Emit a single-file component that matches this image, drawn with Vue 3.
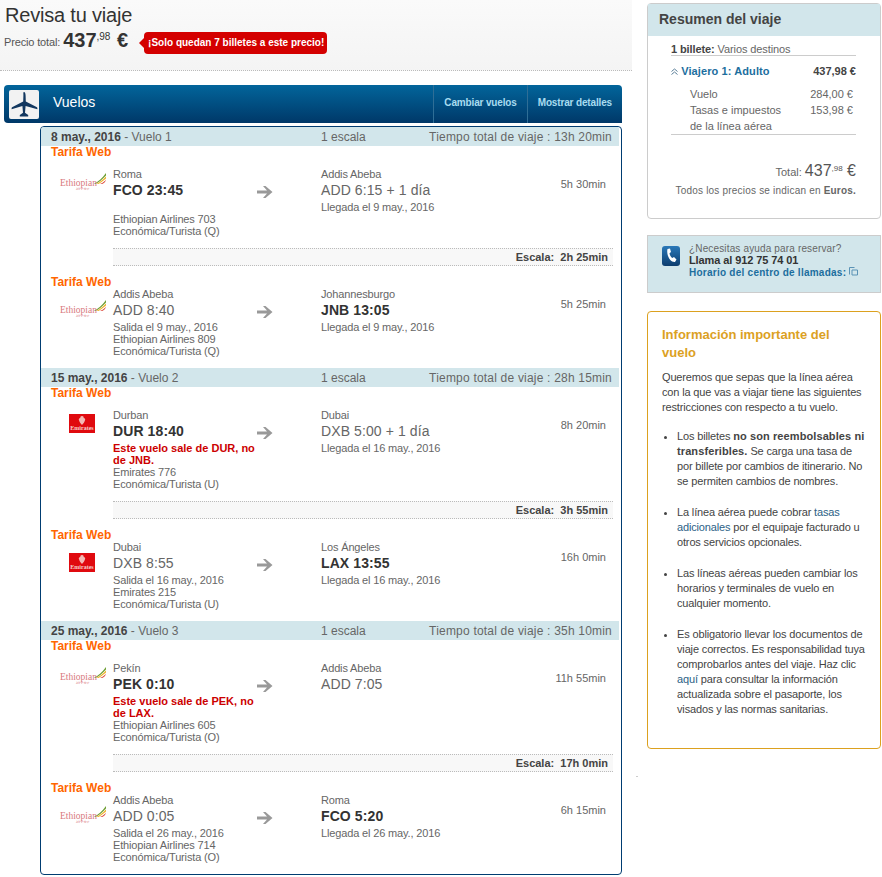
<template>
  <div class="page">
    <div class="left">
      <header class="top">
        <h1>Revisa tu viaje</h1>
        <div class="price-row">
          <span class="price-label">Precio total:</span>
          <span class="price">437<sup>,98</sup> €</span>
          <span class="alert">¡Solo quedan 7 billetes a este precio!</span>
        </div>
      </header>

      <div class="bar">
        <span class="plane-box">
          <svg width="30" height="29" viewBox="0 0 30 29">
            <path d="M15 2c1 0 1.500 1.500 1.600 3.500l.2 6 10.700 5.500c.6.300.9.700.9 1.300v1l-11.800-3.300-.6 6.800 3.200 2.200v1.500h-8.400V25l3.200-2.200-.6-6.800L2.600 19.300v-1c0-.6.300-1 .9-1.300l10.700-5.500.2-6C14.500 3.500 14 2 15 2z" fill="#12375f" />
          </svg>
        </span>
        <span class="bar-title">Vuelos</span>
        <a class="bar-link">Cambiar vuelos</a>
        <a class="bar-link">Mostrar detalles</a>
      </div>

      <div class="flights">
        <section v-for="flight in flights" :key="flight.name" class="flight">
          <div class="day">
            <span class="day-date"><b>{{ flight.date }}</b> - {{ flight.name }}</span>
            <span class="day-stops">1 escala</span>
            <span class="day-total">Tiempo total de viaje : {{ flight.total }}</span>
          </div>
          <template v-for="(seg, i) in flight.segments" :key="i">
            <div class="tarifa" :class="{ later: i > 0 }">Tarifa Web</div>
            <div class="seg" :class="{ 'seg-first': i === 0 }">
              <div class="logo-cell">
                <span v-if="seg.logo === 'et'" class="logo-et">
                  <svg class="et-wing" width="12" height="11" viewBox="0 0 12 11">
                    <path d="M0 10.500C4 9 8 5.500 12 0v2.500C9 6 5 9.500 1.500 11z" fill="#6f9f35" />
                    <path d="M2.500 10.500C6 9.500 9 6.500 12 3.500v2C9 8 6.500 10 4.500 11z" fill="#efb327" />
                    <path d="M6 11c2.500-1 4.500-2.500 6-4.500L11 9c-1 1-2 1.500-3 2z" fill="#d8392b" />
                  </svg>
                  <span class="et-name">Ethiopian</span>
                  <span class="et-sub">እትዮጵያ</span>
                </span>
                <span v-else class="logo-ek">
                  <svg width="8" height="9" viewBox="0 0 8 9">
                    <path d="M4 0c1.500 0 2 1 1.600 2 1.300.2 2 1.200 1.400 2.300C6.500 6 5.600 7.500 4 9 2.400 7.500 1.500 6 1 4.300.4 3.200 1.100 2.200 2.400 2 2 1 2.500 0 4 0z" fill="#f3b9b4" />
                  </svg>
                  <span>Emirates</span>
                </span>
              </div>
              <div class="dep">
                <div class="city">{{ seg.from }}</div>
                <div class="code" :class="{ strong: i === 0 }">{{ seg.dep }}</div>
                <div v-if="seg.warn" class="warn">{{ seg.warn }}</div>
                <div v-else class="line">{{ seg.left || '&nbsp;' }}</div>
                <div class="line">{{ seg.airline }}</div>
                <div class="line">{{ seg.cabin }}</div>
              </div>
              <div class="arrow-cell">
                <svg width="16" height="14" viewBox="0 0 16 14">
                  <path d="M8.500 1L15.500 7l-7 6H6l4-4.500H0v-3h10L6 1z" fill="#999" />
                </svg>
              </div>
              <div class="arr">
                <div class="city">{{ seg.to }}</div>
                <div class="code" :class="{ strong: i === 1 }">{{ seg.arr }}</div>
                <div class="line">{{ seg.note }}</div>
              </div>
              <div class="dur">{{ seg.dur }}</div>
            </div>
            <div v-if="i === 0" class="layover"><b>Escala:&nbsp; {{ flight.layover }}</b></div>
          </template>
        </section>
      </div>
    </div>

    <aside class="right">
      <div class="summary">
        <h2>Resumen del viaje</h2>
        <div class="summary-body">
          <div class="ticket"><b>1 billete:</b> Varios destinos</div>
          <div class="traveller">
            <span class="trav-name">
              <svg width="7" height="7" viewBox="0 0 7 7">
                <path d="M.5 3.500L3.500 1l3 2.500M.5 6.500L3.500 4l3 2.500" fill="none" stroke="#5b7f99" />
              </svg>
              Viajero 1: Adulto
            </span>
            <b>437,98 €</b>
          </div>
          <div class="costs">
            <div class="cost"><span>Vuelo</span><span>284,00 €</span></div>
            <div class="cost"><span>Tasas e impuestos<br>de la línea aérea</span><span>153,98 €</span></div>
          </div>
          <div class="sum-total">Total: <span>437<sup>,98</sup> €</span></div>
          <div class="sum-note">Todos los precios se indican en <b>Euros.</b></div>
        </div>
      </div>

      <div class="help">
        <svg class="phone" width="18" height="20" viewBox="0 0 18 20">
          <defs>
            <linearGradient id="phone-bg" x1="0" y1="0" x2="0" y2="1">
              <stop offset="0" stop-color="#2a78b8" />
              <stop offset="1" stop-color="#0d3d6e" />
            </linearGradient>
          </defs>
          <rect width="18" height="20" rx="3" fill="url(#phone-bg)" />
          <path d="M5.500 3L8 2.500l1 3.500-1.500 1.200c.3 2 1.300 3.700 2.800 4.800l1.700-1 2.500 2.500-1.500 2.500C8.500 16.500 4 9.500 5.500 3z" fill="#fff" />
        </svg>
        <div class="help-text">
          <div>¿Necesitas ayuda para reservar?</div>
          <div class="help-phone">Llama al 912 75 74 01</div>
          <div class="help-hours">Horario del centro de llamadas:
            <svg width="9" height="9" viewBox="0 0 9 9">
              <path d="M.5 7.500V.5h5M3 3h5.500v5H3z" fill="none" stroke="#5b93b5" />
            </svg>
          </div>
        </div>
      </div>

      <div class="info">
        <h3>Información importante del vuelo</h3>
        <p>Queremos que sepas que la línea aérea con la que vas a viajar tiene las siguientes restricciones con respecto a tu vuelo.</p>
        <ul>
          <li>Los billetes <b>no son reembolsables ni transferibles.</b> Se carga una tasa de por billete por cambios de itinerario. No se permiten cambios de nombres.</li>
          <li>La línea aérea puede cobrar <a>tasas adicionales</a> por el equipaje facturado u otros servicios opcionales.</li>
          <li>Las líneas aéreas pueden cambiar los horarios y terminales de vuelo en cualquier momento.</li>
          <li>Es obligatorio llevar los documentos de viaje correctos. Es responsabilidad tuya comprobarlos antes del viaje. Haz clic <a>aquí</a> para consultar la información actualizada sobre el pasaporte, los visados y las normas sanitarias.</li>
        </ul>
      </div>
    </aside>
    <i class="speck"></i>
  </div>
</template>

<script setup>
const flights = [
  {
    date: '8 may., 2016',
    name: 'Vuelo 1',
    total: '13h 20min',
    layover: '2h 25min',
    segments: [
      { logo: 'et', from: 'Roma', dep: 'FCO 23:45', airline: 'Ethiopian Airlines 703', cabin: 'Económica/Turista (Q)', to: 'Addis Abeba', arr: 'ADD 6:15 + 1 día', note: 'Llegada el 9 may., 2016', dur: '5h 30min' },
      { logo: 'et', from: 'Addis Abeba', dep: 'ADD 8:40', left: 'Salida el 9 may., 2016', airline: 'Ethiopian Airlines 809', cabin: 'Económica/Turista (Q)', to: 'Johannesburgo', arr: 'JNB 13:05', note: 'Llegada el 9 may., 2016', dur: '5h 25min' }
    ]
  },
  {
    date: '15 may., 2016',
    name: 'Vuelo 2',
    total: '28h 15min',
    layover: '3h 55min',
    segments: [
      { logo: 'ek', from: 'Durban', dep: 'DUR 18:40', warn: 'Este vuelo sale de DUR, no de JNB.', airline: 'Emirates 776', cabin: 'Económica/Turista (U)', to: 'Dubai', arr: 'DXB 5:00 + 1 día', note: 'Llegada el 16 may., 2016', dur: '8h 20min' },
      { logo: 'ek', from: 'Dubai', dep: 'DXB 8:55', left: 'Salida el 16 may., 2016', airline: 'Emirates 215', cabin: 'Económica/Turista (U)', to: 'Los Ángeles', arr: 'LAX 13:55', note: 'Llegada el 16 may., 2016', dur: '16h 0min' }
    ]
  },
  {
    date: '25 may., 2016',
    name: 'Vuelo 3',
    total: '35h 10min',
    layover: '17h 0min',
    segments: [
      { logo: 'et', from: 'Pekín', dep: 'PEK 0:10', warn: 'Este vuelo sale de PEK, no de LAX.', airline: 'Ethiopian Airlines 605', cabin: 'Económica/Turista (O)', to: 'Addis Abeba', arr: 'ADD 7:05', note: '', dur: '11h 55min' },
      { logo: 'et', from: 'Addis Abeba', dep: 'ADD 0:05', left: 'Salida el 26 may., 2016', airline: 'Ethiopian Airlines 714', cabin: 'Económica/Turista (O)', to: 'Roma', arr: 'FCO 5:20', note: 'Llegada el 26 may., 2016', dur: '6h 15min' }
    ]
  }
]
</script>

<style scoped>
.page {
  position: relative;
  width: 882px;
  height: 877px;
  overflow: hidden;
  display: flex;
  font-family: "Liberation Sans", Arial, sans-serif;
  font-size: 11px;
  color: #666;
  background: #fff;
}

.speck {
  position: absolute;
  left: 636px;
  top: 776px;
  width: 2px;
  height: 1px;
  background: #ccc;
}

.left {
  width: 632px;
  flex: none;
}

.top {
  height: 71px;
  box-sizing: border-box;
  padding: 4px 0 0 5px;
  background: linear-gradient(#fafafa, #f4f4f4);
  border-bottom: 1px dotted #bbb;
}

h1 {
  margin: 0;
  font-size: 20px;
  line-height: 23px;
  font-weight: normal;
  letter-spacing: -.2px;
  color: #333;
}

.price-row {
  display: flex;
  align-items: center;
  height: 26px;
  margin-left: -1px;
}

.price-label {
  font-size: 11px;
  letter-spacing: -.15px;
  color: #555;
  margin-top: 4px;
}

.price {
  margin-left: 3px;
  font-size: 20px;
  font-weight: bold;
  color: #333;
}

.price sup {
  font-size: 10px;
  font-weight: normal;
  vertical-align: 7px;
  line-height: 0;
  margin-right: 1px;
}

.alert {
  position: relative;
  margin-left: 16px;
  margin-top: 5px;
  padding: 0 3px 0 4px;
  height: 22px;
  line-height: 22px;
  background: #d40000;
  border-radius: 4px;
  color: #fff;
  font-size: 10px;
  font-weight: bold;
  white-space: nowrap;
}

.alert::before {
  content: "";
  position: absolute;
  left: -5px;
  top: 6px;
  border: 5px solid transparent;
  border-left: 0;
  border-right-color: #d40000;
}

.bar {
  margin: 14px 0 0 4px;
  width: 618px;
  height: 38px;
  display: flex;
  align-items: center;
  background: linear-gradient(#02659b, #003868);
  border-radius: 4px 4px 0 4px;
  color: #fff;
}

.plane-box {
  width: 30px;
  height: 29px;
  margin-left: 5px;
  background: #f2f2f2;
  border-radius: 2px;
  display: flex;
}

.bar-title {
  flex: 1;
  margin-left: 14px;
  font-size: 14px;
  margin-bottom: 4px;
}

.bar-link {
  height: 100%;
  box-sizing: border-box;
  display: flex;
  align-items: center;
  padding: 0 10px 3px;
  border-left: 1px solid #2f6e96;
  font-size: 10px;
  font-weight: bold;
  letter-spacing: -.15px;
  color: #a8dcf0;
}

.flights {
  width: 582px;
  height: 749px;
  margin: 3px 0 0 40px;
  box-sizing: border-box;
  border: 1px solid #003c71;
  border-radius: 4px;
  overflow: hidden;
}

.flight {
  padding: 0 2px 11px 0;
}

.day {
  display: grid;
  grid-template-columns: 270px 1fr auto;
  height: 19px;
  line-height: 21px;
  padding: 0 7px 0 10px;
  background: #d2e6eb;
  font-size: 12px;
  color: #666;
}

.day-total {
  letter-spacing: .2px;
}

.day-date b {
  color: #444;
}

.tarifa {
  height: 13px;
  line-height: 13px;
  padding-left: 10px;
  font-size: 12px;
  font-weight: bold;
  color: #f60;
}

.tarifa.later {
  height: 12px;
  margin-top: 10px;
}

.seg {
  display: flex;
  align-items: flex-start;
  min-height: 48px;
}

.seg-first {
  padding-top: 9px;
}

.logo-cell {
  width: 72px;
  flex: none;
  height: 40px;
  position: relative;
  top: 7px;
}

.seg-first .logo-cell {
  top: 0;
}

.logo-et {
  position: absolute;
  left: 19px;
  top: 5px;
  width: 46px;
  height: 20px;
  color: #d8787e;
}

.et-wing {
  position: absolute;
  right: 0;
  top: 0;
}

.et-name {
  position: absolute;
  left: 0;
  top: 5px;
  font-family: "Liberation Serif", serif;
  font-size: 9.5px;
  line-height: 11px;
}

.et-sub {
  position: absolute;
  left: 16px;
  top: 13px;
  font-size: 4px;
  line-height: 6px;
}

.logo-ek {
  position: absolute;
  left: 28px;
  top: 5px;
  width: 26px;
  height: 19px;
  background: #e00a0f;
  color: #f6d0cc;
  font-family: "Liberation Serif", serif;
  font-size: 6px;
  font-weight: bold;
  line-height: 6px;
  display: flex;
  flex-direction: column;
  align-items: center;
  justify-content: center;
}

.dep {
  width: 144px;
  flex: none;
}

.city,
.line {
  font-size: 11px;
  line-height: 12px;
  letter-spacing: -.15px;
  color: #666;
}

.line {
  min-height: 12px;
}

.city {
  margin-bottom: 1px;
}

.code {
  height: 18px;
  line-height: 18px;
  font-size: 14px;
  letter-spacing: .1px;
  color: #666;
  margin-bottom: 2px;
  white-space: nowrap;
}

.code.strong {
  font-weight: bold;
  color: #333;
}

.warn {
  font-size: 11px;
  line-height: 12px;
  font-weight: bold;
  color: #c00;
}

.arrow-cell {
  width: 64px;
  flex: none;
  padding-top: 17px;
}

.arr {
  flex: 1;
}

.dur {
  width: 60px;
  padding: 10px 13px 0 0;
  text-align: right;
}

.layover {
  height: 16px;
  line-height: 16px;
  margin: 11px 6px 0 72px;
  background: #f8f8f8;
  border-top: 1px dotted #bbb;
  border-bottom: 1px dotted #bbb;
  text-align: right;
  padding-right: 5px;
}

.layover b {
  color: #444;
}

.right {
  width: 234px;
  margin: 3px 0 0 15px;
  flex: none;
}

.summary {
  height: 216px;
  box-sizing: border-box;
  border: 1px solid #ccc;
  border-radius: 4px;
}

h2 {
  margin: 0;
  height: 32px;
  line-height: 31px;
  padding-left: 11px;
  background: #d2e6eb;
  font-size: 14px;
  color: #444;
}

.summary-body {
  padding: 7px 0 0 23px;
  width: 185px;
}

.ticket {
  height: 12px;
  line-height: 13px;
  border-bottom: 1px solid #ccc;
  letter-spacing: -.1px;
}

.ticket b {
  color: #444;
}

.traveller {
  display: flex;
  justify-content: space-between;
  margin-top: 8px;
  line-height: 14px;
}

.trav-name {
  font-weight: bold;
  letter-spacing: .1px;
  color: #1c6e9e;
}

.traveller b {
  color: #444;
}

.costs {
  margin-top: 8px;
  padding: 0 3px 0 19px;
  border-bottom: 1px solid #ccc;
  line-height: 16px;
}

.cost {
  display: flex;
  justify-content: space-between;
}

.sum-total {
  margin-top: 26px;
  text-align: right;
  line-height: 20px;
}

.sum-total span {
  font-size: 16px;
  color: #555;
}

.sum-total sup {
  font-size: 8px;
  vertical-align: 5px;
  line-height: 0;
}

.sum-note {
  margin-top: 3px;
  margin-left: -5px;
  text-align: right;
  font-size: 10px;
  white-space: nowrap;
  letter-spacing: .2px;
}

.help {
  height: 58px;
  margin-top: 16px;
  box-sizing: border-box;
  border: 1px solid #ccc;
  background: #d2e6eb;
  display: flex;
  padding: 7px 0 0 14px;
}

.phone {
  flex: none;
  margin-top: 3px;
}

.help-text {
  margin-left: 9px;
  font-size: 10px;
  line-height: 12px;
  letter-spacing: .15px;
}

.help-phone {
  font-size: 11px;
  font-weight: bold;
  line-height: 11px;
  margin-bottom: 1px;
  color: #333;
  letter-spacing: -.1px;
}

.help-hours {
  font-weight: bold;
  letter-spacing: .25px;
  color: #1c6e9e;
}

.info {
  height: 438px;
  margin-top: 18px;
  box-sizing: border-box;
  border: 1px solid #dca11f;
  border-radius: 4px;
  padding: 14px 12px 0 14px;
  color: #444;
}

h3 {
  margin: 0;
  padding-right: 20px;
  font-size: 13px;
  line-height: 18px;
  color: #dca11f;
}

p {
  margin: 8px 0 0;
  font-size: 11px;
  line-height: 15px;
  letter-spacing: -.15px;
}

ul {
  margin: 14px 0 0;
  padding: 0 0 0 15px;
}

li {
  line-height: 15px;
  margin-bottom: 16px;
  letter-spacing: -.15px;
}

li a {
  color: #2c5f86;
}

li b {
  color: #444;
  letter-spacing: .1px;
}
</style>

<style>
body {
  margin: 0;
}
</style>
